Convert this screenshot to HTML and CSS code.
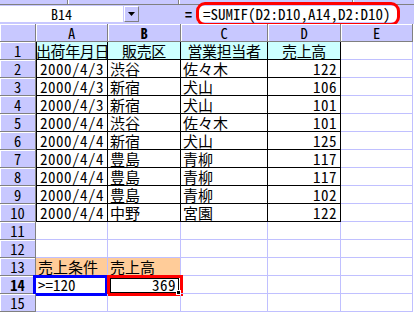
FILE: index.html
```html
<!DOCTYPE html>
<html lang="ja">
<head>
<meta charset="utf-8">
<title>SUMIF</title>
<link rel="stylesheet" href="styles.css">
</head>
<body>
<div class="app">
  <div class="strip"><span class="sep s1"></span><span class="sep s2"></span><span class="sep s3"></span></div>
  <div class="fbar">
    <div class="namebox">B14</div>
    <div class="dd"><svg width="7" height="4" viewBox="0 0 7 4"><path d="M0 0H7L3.5 4Z" fill="#000"/></svg></div>
    <div class="eq">=</div>
    <div class="formula">=SUMIF(D2:D10,A14,D2:D10)</div>
    <div class="rest"></div>
  </div>
  <div class="sheet">
    <div class="c h"></div><div class="c h">A</div><div class="c h bold">B</div><div class="c h">C</div><div class="c h">D</div><div class="c h">E</div>

    <div class="c h">1</div><div class="c b bl cy ctr">出荷年月日</div><div class="c b cy ctr">販売区</div><div class="c b cy ctr">営業担当者</div><div class="c b cy ctr">売上高</div><div class="c"></div>
    <div class="c h">2</div><div class="c b bl r">2000/4/3</div><div class="c b">渋谷</div><div class="c b">佐々木</div><div class="c b r">122</div><div class="c"></div>
    <div class="c h">3</div><div class="c b bl r">2000/4/3</div><div class="c b">新宿</div><div class="c b">犬山</div><div class="c b r">106</div><div class="c"></div>
    <div class="c h">4</div><div class="c b bl r">2000/4/3</div><div class="c b">新宿</div><div class="c b">犬山</div><div class="c b r">101</div><div class="c"></div>
    <div class="c h">5</div><div class="c b bl r">2000/4/4</div><div class="c b">渋谷</div><div class="c b">佐々木</div><div class="c b r">101</div><div class="c"></div>
    <div class="c h">6</div><div class="c b bl r">2000/4/4</div><div class="c b">新宿</div><div class="c b">犬山</div><div class="c b r">125</div><div class="c"></div>
    <div class="c h">7</div><div class="c b bl r">2000/4/4</div><div class="c b">豊島</div><div class="c b">青柳</div><div class="c b r">117</div><div class="c"></div>
    <div class="c h">8</div><div class="c b bl r">2000/4/4</div><div class="c b">豊島</div><div class="c b">青柳</div><div class="c b r">117</div><div class="c"></div>
    <div class="c h">9</div><div class="c b bl r">2000/4/4</div><div class="c b">豊島</div><div class="c b">青柳</div><div class="c b r">102</div><div class="c"></div>
    <div class="c h">10</div><div class="c b bl r">2000/4/4</div><div class="c b">中野</div><div class="c b">宮園</div><div class="c b r">122</div><div class="c"></div>
    <div class="c h">11</div><div class="c"></div><div class="c"></div><div class="c"></div><div class="c"></div><div class="c"></div>
    <div class="c h">12</div><div class="c"></div><div class="c"></div><div class="c"></div><div class="c"></div><div class="c"></div>
    <div class="c h">13</div><div class="c or">売上条件</div><div class="c or">売上高</div><div class="c"></div><div class="c"></div><div class="c"></div>
    <div class="c h bold">14</div><div class="c crit">&gt;=120</div><div class="c r active">369<span class="handle"></span></div><div class="c"></div><div class="c"></div><div class="c"></div>
    <div class="c h">15</div><div class="c"></div><div class="c"></div><div class="c"></div><div class="c"></div><div class="c"></div>
  </div>
</div>
</body>
</html>
```
FILE: styles.css
```css
* { box-sizing: border-box; }
body {
  margin: 0;
  background: #fff;
  color: #000;
  font-family: "Noto Sans CJK JP", sans-serif;
  font-size: 15px;
  font-feature-settings: "hwid" 1;
}
.app {
  width: 414px;
  height: 313px;
  overflow: hidden;
  background: #fff;
}
.strip {
  height: 5px;
  background: #c8c8ff;
  border-bottom: 1px solid #808080;
  display: flex;
}
.sep {
  width: 2px;
  height: 4px;
  border-left: 1px solid #808080;
  border-right: 1px solid #fff;
}
.s1 { margin-left: 67px; }
.s2 { margin-left: 109px; }
.s3 { margin-left: 172px; }

.fbar {
  height: 19px;
  display: flex;
  background: #c8c8ff;
  padding: 1px 0 2px 0;
}
.namebox {
  width: 123px;
  background: #fff;
  text-align: center;
  font-size: 14px;
  line-height: 16px;
}
.dd {
  width: 15px;
  margin-left: 1px;
  border-top: 1px solid #fff;
  border-left: 1px solid #fff;
  border-right: 1px solid #808080;
  border-bottom: 1px solid #808080;
  display: flex;
  align-items: center;
  justify-content: center;
}
.eq {
  width: 58px;
  text-align: right;
  padding-right: 5px;
  font-weight: bold;
  font-size: 14px;
  line-height: 16px;
}
.formula {
  width: 201px;
  position: relative;
  background: #fff;
  padding-left: 6px;
  line-height: 16px;
  white-space: nowrap;
}
.formula::after {
  content: "";
  position: absolute;
  left: -1px;
  top: -4px;
  right: -2px;
  bottom: -4px;
  border: 3px solid #ff0000;
  border-radius: 9px;
}
.rest { flex: 1; }

.sheet {
  display: grid;
  grid-template-columns: 36px 72px 73px 87px 73px 72px;
  grid-auto-rows: 18px;
}
.c {
  border-right: 1px solid #c0c0ff;
  border-bottom: 1px solid #c0c0ff;
  line-height: 17px;
  white-space: nowrap;
  padding: 0 2px;
  position: relative;
}
.h {
  background: #c8c8ff;
  border-right-color: #808080;
  border-bottom-color: #808080;
  box-shadow: inset 1px 1px #fff;
  text-align: center;
  font-size: 14.5px;
}
.bold { font-weight: bold; }
.b { border-right-color: #000; border-bottom-color: #000; }
.bl { box-shadow: inset 1px 0 #000; }
.cy { background: #ccffff; }
.or { background: #ffcc99; }
.ctr { text-align: center; padding: 0; letter-spacing: -0.4px; }
.r { text-align: right; letter-spacing: 0.5px; padding-right: 3px; }

.crit::after {
  content: "";
  position: absolute;
  left: -3px;
  top: -1px;
  right: -1px;
  bottom: -3px;
  border: 3px solid #0000ff;
}
.active { padding-right: 4px; }
.active::before {
  content: "";
  position: absolute;
  left: 2px;
  top: 2px;
  right: 1px;
  bottom: 0;
  border: 1px solid #000;
}
.active::after {
  content: "";
  position: absolute;
  left: -1px;
  top: -1px;
  right: -3px;
  bottom: -3px;
  border: 3px solid #ff0000;
}
.handle {
  position: absolute;
  right: -1px;
  bottom: -2px;
  width: 5px;
  height: 5px;
  background: #000;
  border: 1px solid #fff;
  z-index: 2;
}
```
